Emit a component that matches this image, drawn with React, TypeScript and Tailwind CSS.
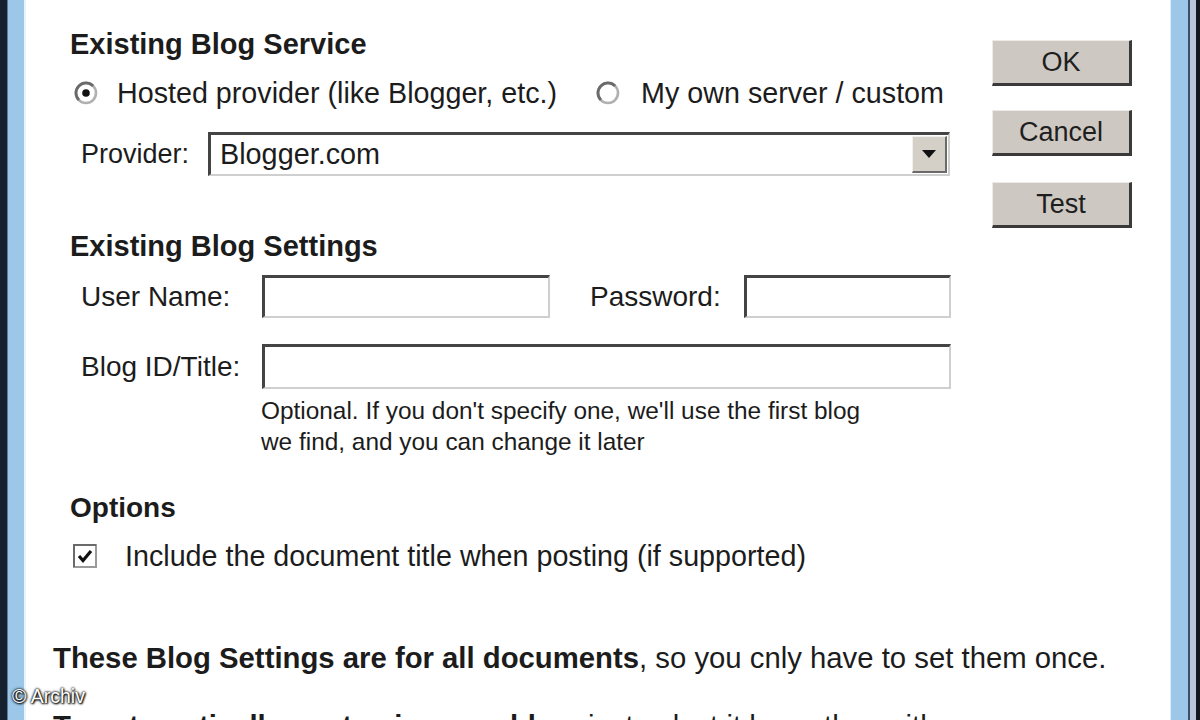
import React from "react";

function Radio({ checked }: { checked?: boolean }) {
  return (
    <svg width="24" height="24" viewBox="0 0 24 24" className="shrink-0">
      <circle cx="12" cy="12" r="10" fill="#fff" stroke="#b0b0b0" strokeWidth="2.6" />
      <path d="M4.9 19.1 A10 10 0 0 1 19.1 4.9" fill="none" stroke="#6a6a6a" strokeWidth="2.8" />
      {checked && <circle cx="12" cy="12" r="3.8" fill="#111" />}
    </svg>
  );
}

function CheckBox() {
  return (
    <svg width="24" height="24" viewBox="0 0 24 24" className="shrink-0">
      <rect x="1" y="1" width="22" height="22" fill="#fff" stroke="#9a9a9a" strokeWidth="2" />
      <path d="M1 23 V1 H23" fill="none" stroke="#6a6a6a" strokeWidth="2" />
      <path d="M6 12 L10 16.5 L18 7" fill="none" stroke="#111" strokeWidth="3.2" />
    </svg>
  );
}

const field =
  "box-border bg-white border-t-[3px] border-l-[3px] border-b-2 border-r-2 border-t-[#444] border-l-[#444] border-b-[#cfcfcf] border-r-[#cfcfcf]";

const btn =
  "box-border w-[140px] h-[46px] flex items-center justify-center bg-[#cdc8c1] border-t border-l border-t-[#ecebe8] border-l-[#ecebe8] border-b-[3px] border-r-[3px] border-b-[#3a3a3a] border-r-[#3a3a3a] text-[27px] text-[#1e1e1e]";

export default function App() {
  return (
    <div className="w-[1200px] h-[720px] overflow-hidden flex font-['Liberation_Sans',Arial,sans-serif] text-[#1c1c1c]">
      {/* left frame */}
      <div className="w-[7px] bg-[#15212f]" />
      <div className="w-[1px] bg-[#5c7c9c]" />
      <div className="w-[16px] bg-[#9cc7e8]" />
      <div className="w-[2px] bg-[#e6f5fb]" />

      {/* content */}
      <div className="relative w-[1144px] bg-white flex flex-col">
        <div className="flex items-start">
          {/* form column */}
          <div className="pl-[44px] pt-[28px] w-[925px] flex flex-col">
            <div className="text-[29px] leading-[32px] font-bold whitespace-nowrap">Existing Blog Service</div>

            <div className="mt-[17px] h-[32px] flex items-center text-[28.7px] leading-[32px] whitespace-nowrap">
              <div className="pl-[4px] flex items-center">
                <Radio checked />
              </div>
              <span className="ml-[19px]">Hosted provider (like Blogger, etc.)</span>
              <div className="ml-[39px] flex items-center">
                <Radio />
              </div>
              <span className="ml-[21px]">My own server / custom</span>
            </div>

            <div className="mt-[23px] h-[44px] flex items-center">
              <div className="w-[138px] pl-[11px] text-[27px] whitespace-nowrap">Provider:</div>
              <div className={`${field} w-[742px] h-[44px] flex items-center justify-between`}>
                <span className="pl-[9px] text-[28.8px] whitespace-nowrap">Blogger.com</span>
                <div className="box-border w-[35px] h-[37px] mr-[1px] bg-[#d4d0c8] border-t border-l border-t-[#f0f0f0] border-l-[#f0f0f0] border-b-2 border-r-2 border-b-[#6a6a6a] border-r-[#6a6a6a] flex items-center justify-center">
                  <svg width="14" height="8" viewBox="0 0 14 8">
                    <polygon points="0,0 14,0 7,8" fill="#111" />
                  </svg>
                </div>
              </div>
            </div>

            <div className="mt-[54px] text-[29px] leading-[32px] font-bold whitespace-nowrap">Existing Blog Settings</div>

            <div className="mt-[13px] h-[43px] flex items-center text-[28px] whitespace-nowrap">
              <div className="w-[192px] pl-[11px]">User Name:</div>
              <div className={`${field} w-[288px] h-[43px]`} />
              <div className="ml-[40px] w-[154px]">Password:</div>
              <div className={`${field} w-[207px] h-[43px]`} />
            </div>

            <div className="mt-[26px] h-[45px] flex items-center text-[28px] whitespace-nowrap">
              <div className="w-[192px] pl-[11px]">Blog ID/Title:</div>
              <div className={`${field} w-[689px] h-[45px]`} />
            </div>

            <div className="mt-[6px] pl-[191px] text-[24.4px] leading-[31px]">
              <div className="whitespace-nowrap">Optional. If you don't specify one, we'll use the first blog</div>
              <div className="whitespace-nowrap">we find, and you can change it later</div>
            </div>

            <div className="mt-[35px] text-[28px] leading-[32px] font-bold">Options</div>

            <div className="mt-[16px] h-[32px] flex items-center text-[28.7px] leading-[32px] whitespace-nowrap">
              <div className="pl-[3px] flex items-center">
                <CheckBox />
              </div>
              <span className="ml-[28px]">Include the document title when posting (if supported)</span>
            </div>
          </div>

          {/* buttons */}
          <div className="ml-[41px] pt-[40px] flex flex-col">
            <div className={btn}>OK</div>
            <div className={`${btn} mt-[24px]`}>Cancel</div>
            <div className={`${btn} mt-[26px]`}>Test</div>
          </div>
        </div>

        <div className="mt-[70px] pl-[27px] text-[29.3px] leading-[32px] whitespace-nowrap">
          <span className="font-bold">These Blog Settings are for all documents</span>, so you cnly have to set them once.
        </div>
        <div className="mt-[36px] pl-[27px] text-[29.3px] leading-[32px] whitespace-nowrap">
          <span className="font-bold">To automatically post using a weblog</span>, just select it here, then either
        </div>

        <div className="absolute left-[-14px] top-[685px] text-[19.5px] leading-[22px] text-white whitespace-nowrap [text-shadow:0_0_2px_#000,0_0_3px_#000,1px_1px_2px_#000]">
          © Archiv
        </div>
      </div>

      {/* right frame */}
      <div className="w-[1px] bg-[#d8eef8]" />
      <div className="w-[17px] bg-[#9cc7e8]" />
      <div className="w-[2px] bg-[#3a4e66]" />
      <div className="w-[6px] bg-[#b8c8da]" />
      <div className="w-[4px] bg-[#101820]" />
    </div>
  );
}
